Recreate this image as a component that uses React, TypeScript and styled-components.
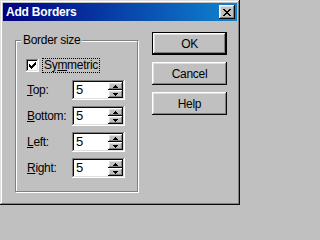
import React from "react";
import styled, { createGlobalStyle } from "styled-components";

const GlobalStyle = createGlobalStyle`
  body {
    margin: 0;
    background: #c0c0c0;
  }
`;

const raised = `
  box-shadow: inset -1px -1px #0a0a0a, inset 1px 1px #ffffff,
    inset -2px -2px #808080, inset 2px 2px #dfdfdf;
`;

const sunken = `
  box-shadow: inset -1px -1px #ffffff, inset 1px 1px #808080,
    inset -2px -2px #dfdfdf, inset 2px 2px #0a0a0a;
`;

const fields = [
  { key: "T", rest: "op:" },
  { key: "B", rest: "ottom:" },
  { key: "L", rest: "eft:" },
  { key: "R", rest: "ight:" },
];

const App: React.FC = () => {
  return (
    <>
      <GlobalStyle />
      <Window>
        <TitleBar>
          <Title>Add Borders</Title>
          <CloseButton aria-label="Close">
            <svg width="8" height="7" viewBox="0 0 8 7">
              <path
                d="M0 0h2v1h1v1h2V1h1V0h2v1H7v1H6v1H5v1h1v1h1v1h1v1H6V6H5V5H3v1H2v1H0V6h1V5h1V4h1V3H2V2H1V1H0z"
                fill="#000"
              />
            </svg>
          </CloseButton>
        </TitleBar>
        <Body>
          <GroupBox>
            <Legend>Border size</Legend>
            <CheckRow>
              <CheckBox>
                <svg width="7" height="7" viewBox="0 0 7 7">
                  <path
                    d="M6 0h1v3H6v1H5v1H4v1H3v1H2V6H1V5H0V2h1v1h1v1h1V3h1V2h1V1h1z"
                    fill="#000"
                  />
                </svg>
              </CheckBox>
              <CheckLabel>
                Sy<u>m</u>metric
              </CheckLabel>
            </CheckRow>
            {fields.map((f) => (
              <FieldRow key={f.key}>
                <FieldLabel>
                  <u>{f.key}</u>
                  {f.rest}
                </FieldLabel>
                <SpinField>
                  <SpinValue>5</SpinValue>
                  <SpinButtons>
                    <SpinButton>
                      <svg width="5" height="3" viewBox="0 0 5 3">
                        <path d="M2 0h1v1h1v1h1v1H0V2h1V1h1z" fill="#000" />
                      </svg>
                    </SpinButton>
                    <SpinButton>
                      <svg width="5" height="3" viewBox="0 0 5 3">
                        <path d="M0 0h5v1H4v1H3v1H2V2H1V1H0z" fill="#000" />
                      </svg>
                    </SpinButton>
                  </SpinButtons>
                </SpinField>
              </FieldRow>
            ))}
          </GroupBox>
          <ButtonColumn>
            <DialogButton $isDefault>OK</DialogButton>
            <DialogButton>Cancel</DialogButton>
            <DialogButton>Help</DialogButton>
          </ButtonColumn>
        </Body>
      </Window>
    </>
  );
};

export default App;

const Window = styled.div`
  width: 240px;
  height: 205px;
  box-sizing: border-box;
  padding: 3px;
  background: #c0c0c0;
  box-shadow: inset -1px -1px #0a0a0a, inset 1px 1px #dfdfdf,
    inset -2px -2px #808080, inset 2px 2px #ffffff;
  font-family: "Liberation Sans", Arial, sans-serif;
  font-size: 12px;
  letter-spacing: -0.3px;
  color: #000;
`;
const TitleBar = styled.div`
  height: 18px;
  display: flex;
  align-items: center;
  justify-content: space-between;
  padding: 0 2px 0 3px;
  background: linear-gradient(90deg, #000080, #1084d0);
`;
const Title = styled.div`
  color: #fff;
  font-weight: 700;
  font-size: 12px;
  letter-spacing: -0.2px;
`;
const CloseButton = styled.div`
  width: 16px;
  height: 14px;
  display: flex;
  align-items: center;
  justify-content: center;
  background: #c0c0c0;
  ${raised}
`;
const Body = styled.div`
  display: flex;
  align-items: flex-start;
  padding: 11px 0 0 12px;
  gap: 14px;
`;
const GroupBox = styled.div`
  position: relative;
  width: 123px;
  height: 152px;
  box-sizing: border-box;
  margin-top: 8px;
  padding: 17px 0 0 10px;
  border: 1px solid #808080;
  box-shadow: 1px 1px 0 #ffffff, inset 1px 1px 0 #ffffff;
  display: flex;
  flex-direction: column;
  gap: 6px;
`;
const Legend = styled.span`
  position: absolute;
  top: -8px;
  left: 5px;
  padding: 0 2px;
  background: #c0c0c0;
  line-height: 14px;
`;
const CheckRow = styled.div`
  display: flex;
  align-items: center;
  height: 14px;
  margin-bottom: 2px;
  gap: 4px;
`;
const CheckBox = styled.div`
  width: 13px;
  height: 13px;
  display: flex;
  align-items: center;
  justify-content: center;
  background: #fff;
  ${sunken}
`;
const CheckLabel = styled.span`
  padding: 0 1px;
  line-height: 13px;
  outline: 1px dotted #000;
`;
const FieldRow = styled.div`
  display: flex;
  align-items: center;
  height: 20px;
`;
const FieldLabel = styled.span`
  width: 45px;
  padding-left: 1px;
`;
const SpinField = styled.div`
  width: 53px;
  height: 20px;
  box-sizing: border-box;
  padding: 2px;
  display: flex;
  align-items: stretch;
  justify-content: space-between;
  background: #fff;
  ${sunken}
`;
const SpinValue = styled.span`
  font-size: 13px;
  line-height: 16px;
  padding-left: 2px;
`;
const SpinButtons = styled.div`
  width: 15px;
  display: flex;
  flex-direction: column;
`;
const SpinButton = styled.div`
  flex: 1;
  display: flex;
  align-items: center;
  justify-content: center;
  background: #c0c0c0;
  ${raised}
`;
const ButtonColumn = styled.div`
  display: flex;
  flex-direction: column;
  gap: 7px;
`;
const DialogButton = styled.button<{ $isDefault?: boolean }>`
  width: 75px;
  height: 23px;
  box-sizing: border-box;
  padding: 0;
  font-family: inherit;
  font-size: 12px;
  letter-spacing: -0.3px;
  color: #000;
  background: #c0c0c0;
  border: ${({ $isDefault }) => ($isDefault ? "1px solid #000" : "none")};
  ${raised}
`;
